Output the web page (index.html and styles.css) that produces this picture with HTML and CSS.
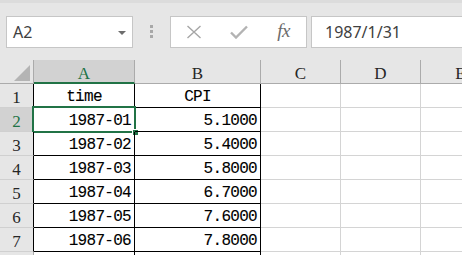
FILE: index.html
```html
<!DOCTYPE html>
<html>
<head>
<meta charset="utf-8">
<link rel="stylesheet" href="styles.css">
</head>
<body>
<div class="toolbar">
  <div class="namebox"><span class="nb-text">A2</span><span class="nb-arrow"></span></div>
  <div class="grip"><i></i><i></i><i></i></div>
  <div class="fbtns">
    <span class="fbtn"><svg width="16" height="14" viewBox="0 0 16 14"><path d="M1.5 1 L14.5 13 M14.5 1 L1.5 13" stroke="#a6a6a6" stroke-width="1.4" fill="none"/></svg></span>
    <span class="fbtn"><svg width="18" height="14" viewBox="0 0 18 14"><path d="M1 7.5 L6 12.5 L17 1.5" stroke="#b3b3b3" stroke-width="2.4" fill="none"/></svg></span>
    <span class="fbtn fx">fx</span>
  </div>
  <div class="finput">1987/1/31</div>
</div>
<div class="sheet">
  <div class="corner"><span class="tri"></span></div>
  <div class="ch sel">A</div>
  <div class="ch">B</div>
  <div class="ch">C</div>
  <div class="ch">D</div>
  <div class="ch">E</div>

  <div class="rh dark">1</div>
  <div class="cb center">time</div>
  <div class="cb center">CPI</div>
  <div class="c"></div><div class="c"></div><div class="c"></div>

  <div class="rh dark sel">2</div>
  <div class="cb num active">1987-01<span class="selbox"></span><span class="handle"></span></div>
  <div class="cb num">5.1000</div>
  <div class="c"></div><div class="c"></div><div class="c"></div>

  <div class="rh dark">3</div>
  <div class="cb num">1987-02</div>
  <div class="cb num">5.4000</div>
  <div class="c"></div><div class="c"></div><div class="c"></div>

  <div class="rh dark">4</div>
  <div class="cb num">1987-03</div>
  <div class="cb num">5.8000</div>
  <div class="c"></div><div class="c"></div><div class="c"></div>

  <div class="rh dark">5</div>
  <div class="cb num">1987-04</div>
  <div class="cb num">6.7000</div>
  <div class="c"></div><div class="c"></div><div class="c"></div>

  <div class="rh dark">6</div>
  <div class="cb num">1987-05</div>
  <div class="cb num">7.6000</div>
  <div class="c"></div><div class="c"></div><div class="c"></div>

  <div class="rh dark">7</div>
  <div class="cb num">1987-06</div>
  <div class="cb num">7.8000</div>
  <div class="c"></div><div class="c"></div><div class="c"></div>

  <div class="rh"></div>
  <div class="cblk"></div>
  <div class="cblk"></div>
  <div class="c"></div><div class="c"></div><div class="c"></div>
</div>
</body>
</html>
```

FILE: styles.css
```css
html, body {
  margin: 0;
  padding: 0;
  width: 462px;
  height: 255px;
  overflow: hidden;
  background: #ffffff;
}

.toolbar {
  height: 60px;
  box-sizing: border-box;
  background: #e6e6e6;
  border-top: 3px solid #dcdcdc;
  padding: 13px 0 0 6px;
  display: flex;
  align-items: flex-start;
  overflow: hidden;
  font-family: "Noto Sans", "Liberation Sans", sans-serif;
}

.namebox {
  flex: 0 0 127px;
  height: 32px;
  box-sizing: border-box;
  background: #fff;
  border: 1px solid #c6c6c6;
  display: flex;
  align-items: center;
  padding-left: 6px;
  position: relative;
}

.nb-text {
  font-size: 16px;
  color: #404040;
  flex: 1;
}

.nb-arrow {
  width: 0;
  height: 0;
  border-left: 4px solid transparent;
  border-right: 4px solid transparent;
  border-top: 4px solid #6d6d6d;
  margin-right: 6px;
  margin-top: 1px;
}

.grip {
  flex: 0 0 3px;
  margin: 9px 17px 0 17px;
  display: flex;
  flex-direction: column;
  gap: 2px;
}

.grip i {
  display: block;
  width: 3px;
  height: 3px;
  background: #a8a8a8;
}

.fbtns {
  flex: 0 0 137px;
  height: 32px;
  box-sizing: border-box;
  background: #fff;
  border: 1px solid #c6c6c6;
  display: flex;
  margin-right: 4px;
}

.fbtn {
  flex: 0 0 45px;
  display: flex;
  align-items: center;
  justify-content: center;
}

.fx {
  font-family: "Liberation Serif", serif;
  font-style: italic;
  font-size: 19px;
  color: #6b6b6b;
  letter-spacing: -0.5px;
  padding-bottom: 2px;
}

.finput {
  flex: 0 0 200px;
  height: 32px;
  box-sizing: border-box;
  background: #fff;
  border: 1px solid #c6c6c6;
  border-right: none;
  display: flex;
  align-items: center;
  padding-left: 13px;
  font-size: 16px;
  color: #404040;
}

.sheet {
  display: grid;
  grid-template-columns: 34px 101px 126px 80px 80px 80px;
  grid-auto-rows: 24px;
  font-family: "Liberation Mono", monospace;
  font-size: 16px;
  letter-spacing: -0.7px;
  color: #000;
  -webkit-text-stroke: 0.1px #000;
}

.sheet > div {
  box-sizing: border-box;
  border-right: 1px solid #d4d4d4;
  border-bottom: 1px solid #d4d4d4;
  line-height: 19px;
  padding-top: 4px;
  white-space: nowrap;
  position: relative;
}

.sheet > .corner {
  background: #e6e6e6;
  border-right: 1px solid #ababab;
  border-bottom: 1px solid #ababab;
  display: flex;
  align-items: flex-end;
  justify-content: flex-end;
  padding: 0 3px 2px 0;
}

.tri {
  width: 16px;
  height: 16px;
  background: #b4b4b4;
  clip-path: polygon(100% 0, 100% 100%, 0 100%);
}

.sheet > .ch {
  background: #e6e6e6;
  border-right: 1px solid #ababab;
  border-bottom: 1px solid #ababab;
  text-align: center;
  font-family: "Liberation Serif", serif;
  font-size: 17px;
  letter-spacing: 0;
  color: #262626;
  -webkit-text-stroke: 0;
}

.sheet > .ch.sel {
  background: #d2d2d2;
  border-bottom: 2px solid #217346;
  color: #217346;
}

.sheet > .rh {
  background: #e6e6e6;
  border-right: 1px solid #ababab;
  border-bottom: 1px solid #d0d0d0;
  text-align: center;
  font-family: "Liberation Serif", serif;
  font-size: 17px;
  letter-spacing: 0;
  color: #262626;
  -webkit-text-stroke: 0;
}

.sheet > .rh.dark {
  border-right-color: #000;
}

.sheet > .rh.sel {
  background: #d2d2d2;
  color: #217346;
}

.sheet > .cb {
  border-right: 1px solid #000;
  border-bottom: 1px solid #000;
}

.sheet > .cblk {
  border-right: 1px solid #000;
}

.center {
  text-align: center;
}

.num {
  text-align: right;
  padding-right: 3px;
}

.selbox {
  position: absolute;
  left: -2px;
  top: -2px;
  right: -2px;
  bottom: -2px;
  border: 2px solid #217346;
}

.handle {
  position: absolute;
  right: -5px;
  bottom: -5px;
  width: 5px;
  height: 5px;
  background: #217346;
  border: 1px solid #fff;
}
```
